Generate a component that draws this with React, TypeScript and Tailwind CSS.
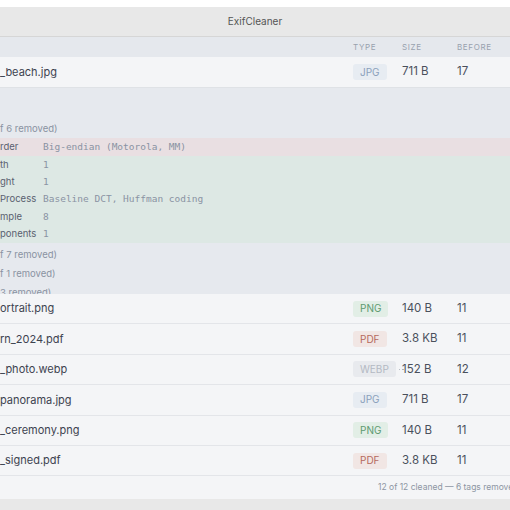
import React from "react";

type Kind = "JPG" | "PNG" | "PDF" | "WEBP";

const badgeStyles: Record<Kind, string> = {
  JPG: "bg-[#e7ecf2] text-[#8aa0bb]",
  PNG: "bg-[#e2eee6] text-[#5e9a70]",
  PDF: "bg-[#f1e6e4] text-[#b56a5d]",
  WEBP: "bg-[#e8eaee] text-[#b3b9c3]",
};

const files: { name: string; kind: Kind; size: string; before: string }[] = [
  { name: "ortrait.png", kind: "PNG", size: "140 B", before: "11" },
  { name: "rn_2024.pdf", kind: "PDF", size: "3.8 KB", before: "11" },
  { name: "_photo.webp", kind: "WEBP", size: "152 B", before: "12" },
  { name: "panorama.jpg", kind: "JPG", size: "711 B", before: "17" },
  { name: "_ceremony.png", kind: "PNG", size: "140 B", before: "11" },
  { name: "_signed.pdf", kind: "PDF", size: "3.8 KB", before: "11" },
];

const tags = [
  { label: "th", value: "1" },
  { label: "ght", value: "1" },
  { label: "Process", value: "Baseline DCT, Huffman coding" },
  { label: "mple", value: "8" },
  { label: "ponents", value: "1" },
];

const sans = "font-['Inter','Liberation_Sans',sans-serif]";
const mono = "font-['DejaVu_Sans_Mono','Liberation_Mono',monospace]";

function Badge({ kind }: { kind: Kind }) {
  return (
    <span
      className={`inline-flex h-4 shrink-0 items-center rounded-[3px] px-[7px] text-[10px] ${badgeStyles[kind]}`}
    >
      {kind}
    </span>
  );
}

function FileRow({
  name,
  kind,
  size,
  before,
}: {
  name: string;
  kind: Kind;
  size: string;
  before: string;
}) {
  return (
    <div className="grid h-[30.4px] grid-cols-[353px_49px_55px_1fr] items-center border-b border-[#e3e5e9] bg-[#f4f5f7] text-[11px] text-[#3d4350]">
      <span className="whitespace-nowrap">{name}</span>
      <span className="flex items-center whitespace-nowrap">
        <Badge kind={kind} />
        {/* truncated cell marker */}
        {kind === "WEBP" && (
          <span className="ml-[3px] flex shrink-0 gap-[2px]">
            <span className="h-[1.5px] w-[1.5px] rounded-full bg-[#a3aab5]" />
            <span className="h-[1.5px] w-[1.5px] rounded-full bg-[#a3aab5]" />
          </span>
        )}
      </span>
      <span className="text-[11.5px] text-[#4a505c]">{size}</span>
      <span className="text-[11.5px] text-[#4a505c]">{before}</span>
    </div>
  );
}

export default function App() {
  return (
    <div className={`h-[510px] w-[510px] overflow-hidden bg-white pt-[7px] ${sans}`}>
      <div className="flex h-[492px] flex-col bg-[#f4f5f7]">
        {/* title bar */}
        <div className="flex h-[30px] items-center justify-center border-b border-[#d6d6d6] bg-[#e8e8e8] text-[10px] text-[#555]">
          ExifCleaner
        </div>

        {/* column headings */}
        <div className="grid h-[20px] grid-cols-[353px_49px_55px_1fr] items-center bg-[#e5e8ed] text-[8px] tracking-[0.08em] text-[#98a1ae]">
          <span />
          <span>TYPE</span>
          <span>SIZE</span>
          <span>BEFORE</span>
        </div>

        <div className="grid h-[31px] grid-cols-[353px_49px_55px_1fr] items-center border-b border-[#dfe2e6] bg-[#f4f5f7] text-[11px] text-[#3d4350]">
          <span>_beach.jpg</span>
          <span>
            <Badge kind="JPG" />
          </span>
          <span className="text-[11.5px] text-[#4a505c]">711 B</span>
          <span className="text-[11.5px] text-[#4a505c]">17</span>
        </div>

        {/* expanded metadata for the selected file */}
        <div className="h-[206px] shrink-0 overflow-hidden bg-[#e6e9ee] pt-[33px] text-[9.5px]">
          <div className="flex h-[17px] items-center whitespace-nowrap text-[#8a93a2]">
            f 6 removed)
          </div>
          <div className="flex h-[18px] items-center bg-[#e9dfe2]">
            <span className="w-[43px] shrink-0 text-[#5a6170]">rder</span>
            <span className={`${mono} text-[#8a93a3]`}>Big-endian (Motorola, MM)</span>
          </div>
          <div className="bg-[#dde8e4]">
            {tags.map((t) => (
              <div key={t.label} className="flex h-[17.4px] items-center">
                <span className="w-[43px] shrink-0 text-[#5a6170]">{t.label}</span>
                <span className={`${mono} text-[#8a93a3]`}>{t.value}</span>
              </div>
            ))}
          </div>
          <div className="pt-[3px] text-[#8a93a2]">
            <div className="flex h-[19px] items-center">f 7 removed)</div>
            <div className="flex h-[19px] items-center">f 1 removed)</div>
            <div className="flex h-[19px] items-center">3 removed)</div>
          </div>
        </div>

        {files.map((f) => (
          <FileRow key={f.name} {...f} />
        ))}

        <div className="flex flex-1 items-center whitespace-nowrap pl-[378px] text-[8.5px] text-[#8d96a3]">
          12 of 12 cleaned — 6 tags removed
        </div>
      </div>
      <div className="h-[11px] bg-[#e8e8e8]" />
    </div>
  );
}
